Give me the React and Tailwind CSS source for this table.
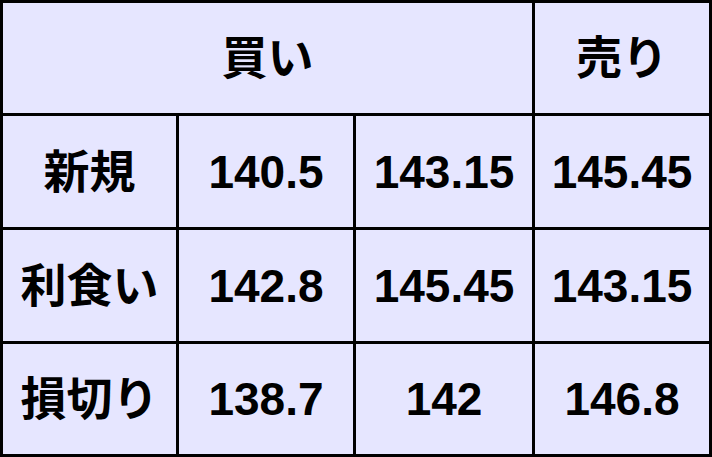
import React from "react";

const rows = [
  ["新規", "140.5", "143.15", "145.45"],
  ["利食い", "142.8", "145.45", "143.15"],
  ["損切り", "138.7", "142", "146.8"],
];

function Cell({ children, className = "" }) {
  return (
    <div
      className={`flex items-center justify-center bg-[#e6e6ff] text-[46px] font-bold text-black leading-none whitespace-nowrap ${className}`}
    >
      {children}
    </div>
  );
}

export default function App() {
  return (
    <div
      className="grid w-[712px] h-[457px] grid-cols-[173px_174px_176px_174px] grid-rows-[110px_111px_111px_110px] gap-[3px] bg-black p-[3px]"
      style={{ fontFamily: '"Liberation Sans", Arial, "Noto Sans CJK JP", sans-serif' }}
    >
      {/* header */}
      <Cell className="col-span-3">買い</Cell>
      <Cell>売り</Cell>

      {rows.map((row) =>
        row.map((v, i) => <Cell key={row[0] + i}>{v}</Cell>)
      )}
    </div>
  );
}
